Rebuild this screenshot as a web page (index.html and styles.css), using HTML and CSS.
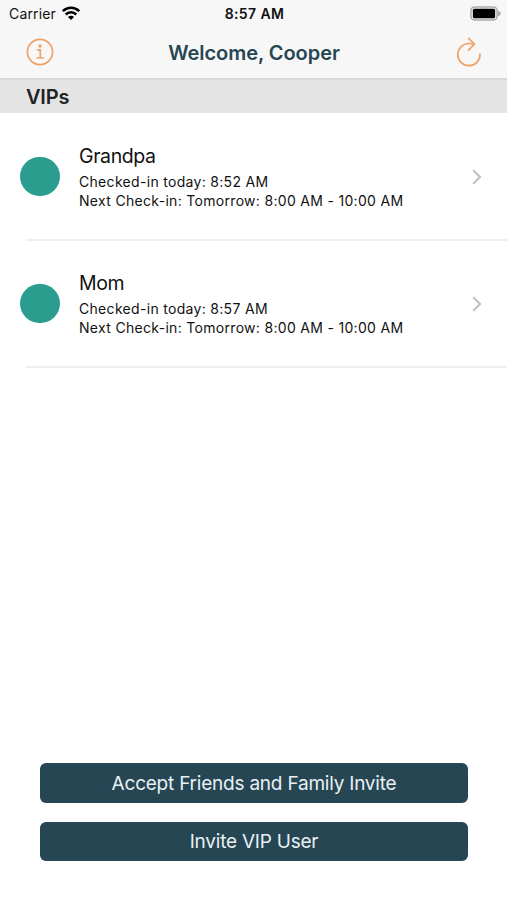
FILE: index.html
```html
<!DOCTYPE html>
<html lang="en">
<head>
<meta charset="utf-8">
<title>Welcome, Cooper</title>
<link rel="stylesheet" href="styles.css">
</head>
<body>
<div class="app">
  <header class="top">
    <div class="status">
      <div class="carrier"><span class="carrier-name">Carrier</span>
        <svg class="wifi" width="18" height="14" viewBox="0 0 18 14" fill="none" stroke="#000" stroke-width="2.5"><path d="M.8 5.2a11.5 11.5 0 0 1 16.4 0M3.7 8.5a7.5 7.5 0 0 1 10.6 0"/><path d="M6 10.9a4.2 4.2 0 0 1 6 0L9 14z" fill="#000" stroke="none"/></svg>
      </div>
      <span class="time">8:57 AM</span>
      <svg class="battery" width="31" height="15" viewBox="0 0 31 15"><rect x=".9" y=".9" width="26.2" height="13.2" rx="3.8" fill="#ededed" stroke="#acacac" stroke-width="1.5"/><rect x="2.9" y="2.7" width="22.2" height="9.6" rx="1.6" fill="#000"/><path d="M28 4.7c3.6.8 3.6 4.8 0 5.6z" fill="#acacac"/></svg>
    </div>
    <div class="nav">
      <svg class="info" width="28" height="28" viewBox="0 0 28 28" fill="none" stroke="#efa166" stroke-width="1.7"><circle cx="14" cy="14" r="12.6"/><path d="M11.1 11.9h3.2v8M10.5 20h7.4"/><circle cx="14" cy="8" r="1.7" fill="#efa166" stroke="none"/></svg>
      <h1 class="title">Welcome, Cooper</h1>
      <svg class="refresh" width="26" height="30" viewBox="0 0 26 30" fill="none" stroke="#efa166" stroke-width="1.7" stroke-linecap="round" stroke-linejoin="round"><path d="M24 17A11.1 11.1 0 1 1 13 6.5c2 0 3.7.1 5.2.5M12.6 1.3l5.9 5.8-5.9 6.1"/></svg>
    </div>
  </header>
  <h2 class="section">VIPs</h2>
  <main class="list">
    <article class="row">
      <span class="dot"></span>
      <div class="details">
        <h3 class="name">Grandpa</h3>
        <p class="line">Checked-in today: 8:52 AM</p>
        <p class="line">Next Check-in: Tomorrow: 8:00 AM - 10:00 AM</p>
      </div>
      <svg class="chevron" width="10" height="16" viewBox="0 0 10 16" fill="none" stroke="#c3c3c5" stroke-width="2.3"><path d="M1.2 1.2 8 8l-6.8 6.8"/></svg>
    </article>
    <article class="row">
      <span class="dot"></span>
      <div class="details">
        <h3 class="name">Mom</h3>
        <p class="line">Checked-in today: 8:57 AM</p>
        <p class="line">Next Check-in: Tomorrow: 8:00 AM - 10:00 AM</p>
      </div>
      <svg class="chevron" width="10" height="16" viewBox="0 0 10 16" fill="none" stroke="#c3c3c5" stroke-width="2.3"><path d="M1.2 1.2 8 8l-6.8 6.8"/></svg>
    </article>
  </main>
  <footer class="actions">
    <button class="button">Accept Friends and Family Invite</button>
    <button class="button">Invite VIP User</button>
  </footer>
</div>
</body>
</html>
```
FILE: styles.css
```css
* { box-sizing: border-box; }
body, h1, h2, h3, p { margin: 0; }
body { font-family: Inter, "Liberation Sans", sans-serif; background: #fff; color: #111; }
svg { display: block; flex: none; }
.app { height: 900px; display: flex; flex-direction: column; overflow: hidden; }
.top { height: 80px; background: #f7f7f7; border-bottom: 2px solid #d8d8d8; flex: none; }
.status { height: 27px; padding: 0 6px 0 9px; display: grid; grid-template-columns: 1fr auto 1fr; align-items: center; }
.carrier { display: flex; align-items: center; gap: 6px; font-size: 14px; letter-spacing: .15px; }
.wifi { margin-top: -2px; }
.time { font-size: 14px; font-weight: 600; letter-spacing: .4px; margin-right: 1px; }
.battery { justify-self: end; }
.nav { height: 50px; padding: 0 25px 0 26px; display: flex; align-items: center; justify-content: space-between; }
.title { font-size: 20px; line-height: 24px; font-weight: 600; color: #264653; letter-spacing: -.06px; margin-right: 2px; padding-top: 2px; }
.refresh { margin-bottom: 1px; }
.section { flex: none; height: 33px; padding-left: 26px; background: #e4e4e4; font-size: 20px; line-height: 34px; font-weight: 600; color: #222; letter-spacing: -.2px; }
.list { flex: 1; padding-top: 1px; }
.row { height: 127px; display: flex; align-items: center; margin-left: 26px; padding-right: 25px; border-bottom: 2px solid #efefef; }
.dot { width: 39.4px; height: 39.4px; margin-left: -5.7px; border-radius: 50%; background: #2a9d8f; flex: none; }
.details { flex: 1; padding-left: 19.3px; white-space: nowrap; }
.name { font-size: 19.5px; line-height: 26px; font-weight: 400; margin-bottom: 3px; letter-spacing: -.4px; }
.line { font-size: 14px; line-height: 19px; letter-spacing: .31px; }
.actions { flex: none; padding: 0 39px 39px 40px; display: flex; flex-direction: column; gap: 19px; }
.button { height: 39.4px; border: 0; border-radius: 6px; padding: 0; background: #264653; color: #e9f1f5; font: 400 19px/39.4px Inter, sans-serif; letter-spacing: -.22px; }
.button:first-child { padding-top: 1px; }
```
